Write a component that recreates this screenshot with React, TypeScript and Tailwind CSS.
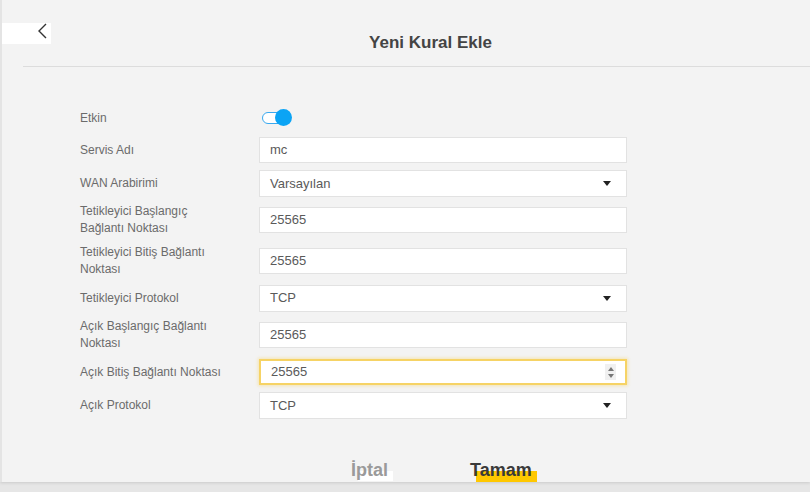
import React from "react";

const font = { fontFamily: '"Liberation Sans", Arial, sans-serif' };

function Label({ children }: { children: React.ReactNode }) {
  return (
    <div className="w-[257px] shrink-0 whitespace-nowrap pl-[78px] text-[12px] leading-[17px] text-[#6b6b6b]">
      {children}
    </div>
  );
}

function TextInput({ value, focused }: { value: string; focused?: boolean }) {
  return (
    <div
      className={
        "relative flex h-[26px] w-[368px] items-center bg-white pl-[10px] text-[13px] text-[#5a5a5a] " +
        (focused
          ? "border-2 border-[#f6d365] shadow-[0_0_3px_1px_rgba(246,211,101,0.45)]"
          : "border border-[#e2e2e2]")
      }
    >
      {value}
      {focused && (
        <div className="absolute right-[9px] top-[3px] flex h-[16px] w-[11px] flex-col items-center justify-center gap-[3px] bg-[#f0f0f0]">
          <svg width="6" height="4" viewBox="0 0 6 4">
            <path d="M0 4 L3 0 L6 4 Z" fill="#777" />
          </svg>
          <svg width="6" height="4" viewBox="0 0 6 4">
            <path d="M0 0 L3 4 L6 0 Z" fill="#777" />
          </svg>
        </div>
      )}
    </div>
  );
}

function Select({ value }: { value: string }) {
  return (
    <div className="flex h-[27px] w-[368px] items-center justify-between border border-[#e2e2e2] bg-white pl-[10px] pr-[15px] text-[13px] text-[#5a5a5a]">
      <span>{value}</span>
      <svg width="8" height="5" viewBox="0 0 8 5">
        <path d="M0 0 L8 0 L4 5 Z" fill="#222" />
      </svg>
    </div>
  );
}

function Row({ children, h }: { children: React.ReactNode; h: string }) {
  return <div className={"flex items-center " + h}>{children}</div>;
}

export default function App() {
  return (
    <div className="flex h-[492px] w-[810px] flex-col bg-[#e6e6e6]" style={font}>
      <div className="relative flex h-[482px] flex-col border-l-2 border-[#e4e4e4] bg-[#f3f3f3] shadow-[0_1px_3px_rgba(0,0,0,0.12)]">
        {/* header */}
        <div className="flex h-[66px] items-start">
          <div className="mt-[23px] flex h-[21px] w-[49px] shrink-0 items-start justify-end bg-white pr-[4px]">
            <svg width="9" height="16" viewBox="0 0 9 16">
              <path d="M8 1 L1 8 L8 15" fill="none" stroke="#333" strokeWidth="1.4" />
            </svg>
          </div>
          <div className="flex-1 pt-[32px] text-center text-[17px] font-bold leading-[22px] text-[#444]">
            Yeni Kural Ekle
          </div>
        </div>
        <div className="ml-[21px] h-px bg-[#dcdcdc]" />

        {/* form */}
        <div className="mt-[37px] flex flex-col gap-[7px]">
          <Row h="h-[26px]">
            <Label>
              <span className="relative top-[1px]">Etkin</span>
            </Label>
            <div className="relative ml-[3px] h-[17px] w-[30px]">
              <div className="absolute left-0 top-[3px] h-[12px] w-[24px] rounded-full border border-[#39a9f0] bg-white" />
              <div className="absolute right-0 top-0 h-[17px] w-[17px] rounded-full bg-[#0ba4f5]" />
            </div>
          </Row>
          <Row h="h-[26px]">
            <Label>Servis Adı</Label>
            <TextInput value="mc" />
          </Row>
          <Row h="h-[27px]">
            <Label>WAN Arabirimi</Label>
            <Select value="Varsayılan" />
          </Row>
          <Row h="h-[34px] mt-[-1px]">
            <Label>
              Tetikleyici Başlangıç
              <br />
              Bağlantı Noktası
            </Label>
            <TextInput value="25565" />
          </Row>
          <Row h="h-[34px]">
            <Label>
              Tetikleyici Bitiş Bağlantı
              <br />
              Noktası
            </Label>
            <TextInput value="25565" />
          </Row>
          <Row h="h-[26px]">
            <Label>Tetikleyici Protokol</Label>
            <Select value="TCP" />
          </Row>
          <Row h="h-[34px]">
            <Label>
              Açık Başlangıç Bağlantı
              <br />
              Noktası
            </Label>
            <TextInput value="25565" />
          </Row>
          <Row h="h-[26px]">
            <Label>Açık Bitiş Bağlantı Noktası</Label>
            <TextInput value="25565" focused />
          </Row>
          <Row h="h-[27px]">
            <Label>Açık Protokol</Label>
            <Select value="TCP" />
          </Row>
        </div>

        {/* buttons */}
        <div className="absolute bottom-0 left-0 right-0 flex h-[30px] items-end pl-[349px]">
          <div className="relative h-[30px] w-[119px]">
            <div className="absolute bottom-[1px] left-[7px] h-[10px] w-[35px] bg-white" />
            <span className="absolute bottom-[1px] left-0 text-[18px] font-bold leading-[22px] text-[#9a9a9a]">İptal</span>
          </div>
          <div className="relative h-[30px] w-[70px]">
            <div className="absolute bottom-0 left-[6px] h-[11px] w-[61px] bg-[#ffc800]" />
            <span className="absolute bottom-[1px] left-0 text-[18px] font-bold leading-[22px] text-[#3a3a3a]">Tamam</span>
          </div>
        </div>
      </div>
    </div>
  );
}
